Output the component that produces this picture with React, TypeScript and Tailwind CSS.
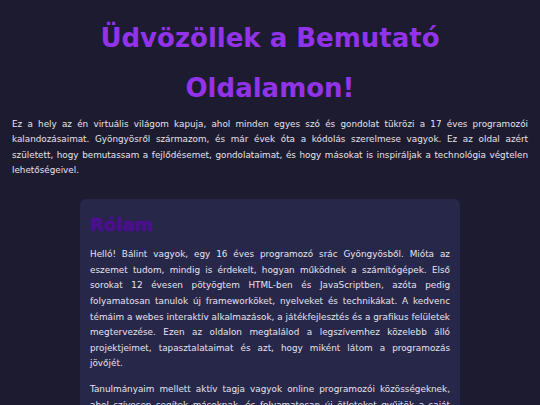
export default function App() {
  return (
    <div className="min-h-screen bg-[#1d1b2f] px-3 pb-10 pt-[13px] font-['DejaVu_Sans',sans-serif] text-[#e6e3ee]">
      <h1 className="text-center text-[26px] font-bold leading-[50px] text-[#9233ea]">
        Üdvözöllek a Bemutató
        <br />
        Oldalamon!
      </h1>
      <p className="mt-[4px] text-justify text-[8.8px] leading-[15.3px]">
        Ez a hely az én virtuális világom kapuja, ahol minden egyes szó és gondolat tükrözi a 17 éves
        programozói kalandozásaimat. Gyöngyösről származom, és már évek óta a kódolás szerelmese vagyok.
        Ez az oldal azért született, hogy bemutassam a fejlődésemet, gondolataimat, és hogy másokat is
        inspiráljak a technológia végtelen lehetőségeivel.
      </p>

      <section className="mx-auto mt-[21px] w-[380px] rounded-md bg-[#27274a] px-[10px] pb-4 pt-[11px]">
        <h2 className="text-[18px] font-bold leading-[30px] text-[#4b0f8f] [text-shadow:0_0_2px_#4b0f8f]">
          Rólam
        </h2>
        <div className="mt-[7px] space-y-[10px] text-justify text-[8.85px] leading-[15.6px]">
          <p>
            Helló! Bálint vagyok, egy 16 éves programozó srác Gyöngyösből. Mióta az eszemet tudom, mindig
            is érdekelt, hogyan működnek a számítógépek. Első sorokat 12 évesen pötyögtem HTML-ben és
            JavaScriptben, azóta pedig folyamatosan tanulok új frameworköket, nyelveket és technikákat. A
            kedvenc témáim a webes interaktív alkalmazások, a játékfejlesztés és a grafikus felületek
            megtervezése. Ezen az oldalon megtalálod a legszívemhez közelebb álló projektjeimet,
            tapasztalataimat és azt, hogy miként látom a programozás jövőjét.
          </p>
          <p>
            Tanulmányaim mellett aktív tagja vagyok online programozói közösségeknek, ahol szívesen
            segítek másoknak, és folyamatosan új ötleteket gyűjtök a saját projektjeimhez.
          </p>
        </div>
      </section>
    </div>
  );
}
